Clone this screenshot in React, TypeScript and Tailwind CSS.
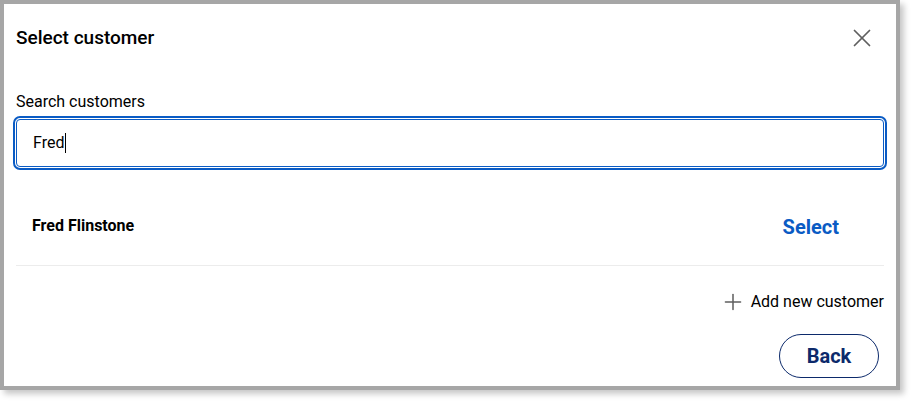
import { Plus, X } from 'lucide-react'

export default function App() {
  return (
    <div className="min-h-screen bg-white font-['Roboto',sans-serif] text-black">
      <div className="flex h-[390px] w-[900px] flex-col border-4 border-[#a6a6a6] bg-white px-3 shadow-[4px_4px_6px_rgba(0,0,0,0.22)]">
        <div className="flex h-[68px] items-center justify-between">
          <h1 className="text-[19px] font-medium leading-6">Select customer</h1>
          <button className="mr-[7px] text-[#5f5f5f]">
            <X size={30} strokeWidth={1.4} />
          </button>
        </div>

        <label className="mt-5 text-[16px] leading-5">Search customers</label>
        <div className="mt-[7px] flex h-[48px] items-center rounded-[4px] border border-[#0a5bc4] px-4 text-[16px] outline-2 outline-offset-1 outline-[#0a5bc4]">
          <span>Fred</span>
          <span className="ml-[1px] h-[20px] w-[1px] bg-black" />
        </div>

        <div className="mt-5 flex h-[79px] items-center justify-between border-b border-[#ececec] pl-4 pr-[45px]">
          <span className="text-[16px] font-bold">Fred Flinstone</span>
          <button className="pt-[2px] text-[20px] font-bold text-[#0a5bc4]">Select</button>
        </div>

        <div className="mt-[23px] flex items-center justify-end gap-[5px] text-[16px] leading-6">
          <Plus size={26} strokeWidth={1.4} className="text-[#5f5f5f]" />
          <span>Add new customer</span>
        </div>

        <div className="mt-[19px] flex justify-end pr-[5px]">
          <button className="h-[44px] w-[100px] rounded-full border border-[#0c2a6b] text-[20px] font-bold text-[#0c2a6b]">
            Back
          </button>
        </div>
      </div>
    </div>
  )
}
